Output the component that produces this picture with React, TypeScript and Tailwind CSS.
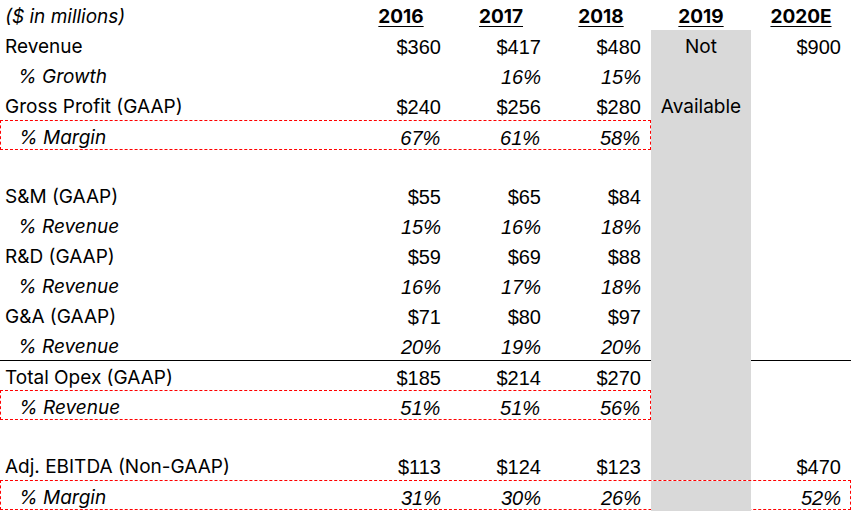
import React from 'react';

type Row = {
   label: string;
   sub?: boolean;
   values?: string[];
   y2019?: string;
   y2020?: string;
   box?: 'left' | 'full';
   lineTop?: boolean;
   blank?: boolean;
};

const rows: Row[] = [
   { label: 'Revenue', values: ['$360', '$417', '$480'], y2019: 'Not', y2020: '$900' },
   { label: '% Growth', sub: true, values: ['', '16%', '15%'] },
   { label: 'Gross Profit (GAAP)', values: ['$240', '$256', '$280'], y2019: 'Available' },
   { label: '% Margin', sub: true, values: ['67%', '61%', '58%'], box: 'left' },
   { label: '', blank: true },
   { label: 'S&M (GAAP)', values: ['$55', '$65', '$84'] },
   { label: '% Revenue', sub: true, values: ['15%', '16%', '18%'] },
   { label: 'R&D (GAAP)', values: ['$59', '$69', '$88'] },
   { label: '% Revenue', sub: true, values: ['16%', '17%', '18%'] },
   { label: 'G&A (GAAP)', values: ['$71', '$80', '$97'] },
   { label: '% Revenue', sub: true, values: ['20%', '19%', '20%'] },
   { label: 'Total Opex (GAAP)', values: ['$185', '$214', '$270'], lineTop: true },
   { label: '% Revenue', sub: true, values: ['51%', '51%', '56%'], box: 'left' },
   { label: '', blank: true },
   { label: 'Adj. EBITDA (Non-GAAP)', values: ['$113', '$124', '$123'], y2020: '$470' },
   { label: '% Margin', sub: true, values: ['31%', '30%', '26%'], y2020: '52%', box: 'full' },
];

const labelFont = "font-['Inter','Liberation_Sans',sans-serif] text-[19px]";
const numFont = "font-['Liberation_Sans',Arial,sans-serif] text-[20px]";

const App: React.FC = () => {
   const renderRow = (row: Row, i: number) => {
      const line = row.lineTop ? 'border-t border-black' : '';
      const labelCell = (
         <div
            className={`h-[30px] pt-[2px] leading-[30px] ${labelFont} ${row.sub ? 'italic pl-[18px]' : 'pl-[5px]'} ${line} ${row.box ? 'w-[350px]' : 'w-[351px]'}`}
         >
            {row.label}
         </div>
      );
      const numCells = [0, 1, 2].map((c) => (
         <div
            key={c}
            className={`w-[100px] h-[30px] pt-[2px] leading-[30px] text-right pr-[10px] ${numFont} ${row.sub ? 'italic' : ''} ${line}`}
         >
            {row.values?.[c] ?? ''}
         </div>
      ));
      const grayCell = (
         <div className={`w-[100px] h-[30px] pt-[2px] leading-[30px] text-center bg-[#d9d9d9] ${labelFont}`}>
            {row.y2019 ?? ''}
         </div>
      );
      const lastCell = (
         <div
            className={`w-[100px] h-[30px] pt-[2px] leading-[30px] text-right pr-[10px] ${numFont} ${row.sub ? 'italic' : ''} ${line}`}
         >
            {row.y2020 ?? ''}
         </div>
      );

      if (row.box === 'left') {
         return (
            <div key={i} className="flex">
               <div className="flex w-[651px] h-[30px] border border-dashed border-[#ff0000]">
                  {labelCell}
                  {numCells}
               </div>
               {grayCell}
               {lastCell}
            </div>
         );
      }
      if (row.box === 'full') {
         return (
            <div key={i} className="flex">
               <div className="flex w-[851px] h-[30px] border border-dashed border-[#ff0000]">
                  {labelCell}
                  {numCells}
                  {grayCell}
                  <div className={`w-[99px] h-[30px] pt-[2px] leading-[30px] text-right pr-[9px] ${numFont} italic`}>
                     {row.y2020 ?? ''}
                  </div>
               </div>
            </div>
         );
      }
      return (
         <div key={i} className="flex">
            {labelCell}
            {numCells}
            {grayCell}
            {lastCell}
         </div>
      );
   };

   return (
      <div className="w-[853px] h-[512px] bg-white text-black overflow-hidden">
         <div className="flex">
            <div className={`w-[351px] h-[30px] pt-[2px] leading-[30px] pl-[5px] italic ${labelFont}`}>
               ($ in millions)
            </div>
            {['2016', '2017', '2018', '2019', '2020E'].map((y) => (
               <div
                  key={y}
                  className={`w-[100px] h-[30px] pt-[2px] leading-[30px] text-center font-bold underline underline-offset-[3px] ${labelFont}`}
               >
                  {y}
               </div>
            ))}
         </div>
         {rows.map(renderRow)}
      </div>
   );
};

export default App;
